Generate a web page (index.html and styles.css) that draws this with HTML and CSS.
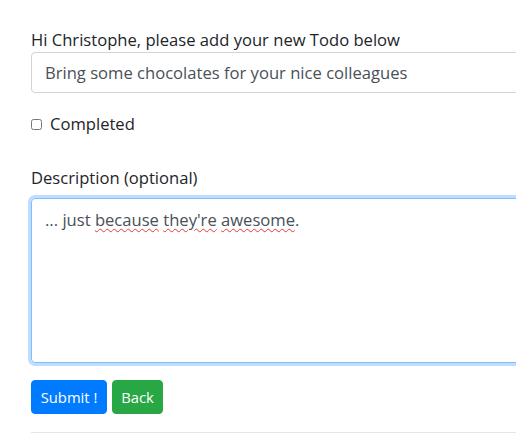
FILE: index.html
```html
<!DOCTYPE html>
<html lang="en">
<head>
<meta charset="utf-8">
<title>New Todo</title>
<link rel="stylesheet" href="styles.css">
</head>
<body>
<main class="page">
  <form class="todo-form">
    <label class="field-label" for="title">Hi Christophe, please add your new Todo below</label>
    <input class="form-control title-input" id="title" type="text" value="Bring some chocolates for your nice colleagues">
    <div class="check-row">
      <input class="check" id="completed" type="checkbox">
      <label class="check-label" for="completed">Completed</label>
    </div>
    <label class="field-label desc-label" for="desc">Description (optional)</label>
    <div class="textarea focused" id="desc"><span>... just <span class="spell">because</span> <span class="spell">they're</span> <span class="spell">awesome</span>.</span></div>
    <div class="actions">
      <button class="btn btn-primary" type="button">Submit !</button>
      <button class="btn btn-success" type="button">Back</button>
    </div>
    <hr class="rule">
  </form>
</main>
</body>
</html>
```
FILE: styles.css
```css
html, body {
  margin: 0;
  padding: 0;
  overflow: hidden;
  background: #fff;
}
body {
  font-family: "Open Sans", "Noto Sans", sans-serif;
  font-size: 16.6px;
  color: #212529;
}
.page {
  padding: 28px 0 0 31px;
  width: 560px;
}
.todo-form {
  display: flex;
  flex-direction: column;
}
.field-label {
  line-height: 24px;
  display: block;
}
.form-control {
  box-sizing: border-box;
  width: 100%;
  height: 41px;
  margin: 0;
  padding: 0 13px;
  font: inherit;
  color: #495057;
  border: 1px solid #ced4da;
  border-radius: 4px;
  background: #fff;
  outline: none;
}
.check-row {
  display: flex;
  align-items: center;
  margin-top: 19px;
  height: 24px;
}
.check {
  margin: 0 8px 0 0;
  width: 11px;
  height: 11px;
}
.check-label {
  line-height: 24px;
}
.desc-label {
  margin-top: 30px;
}
.textarea {
  box-sizing: border-box;
  margin-top: 8px;
  height: 165px;
  padding: 9px 13px;
  line-height: 24px;
  color: #495057;
  border: 1px solid #80bdff;
  border-radius: 4px;
  box-shadow: 0 0 0 3px rgba(0, 123, 255, 0.25);
}
.spell {
  text-decoration: underline wavy #e53935;
  text-decoration-thickness: 1px;
  text-underline-offset: 2px;
}
.actions {
  display: flex;
  gap: 5px;
  margin-top: 17px;
}
.btn {
  height: 34px;
  padding: 0;
  white-space: nowrap;
  font: inherit;
  font-size: 14.8px;
  color: #fff;
  border: 1px solid transparent;
  border-radius: 4px;
  cursor: pointer;
}
.btn-primary {
  background: #007bff;
  border-color: #007bff;
  width: 76px;
}
.btn-success {
  background: #28a745;
  border-color: #28a745;
  width: 51px;
}
.rule {
  margin: 18px 0 0;
  border: 0;
  border-top: 1px solid #e5e5e5;
}
```
